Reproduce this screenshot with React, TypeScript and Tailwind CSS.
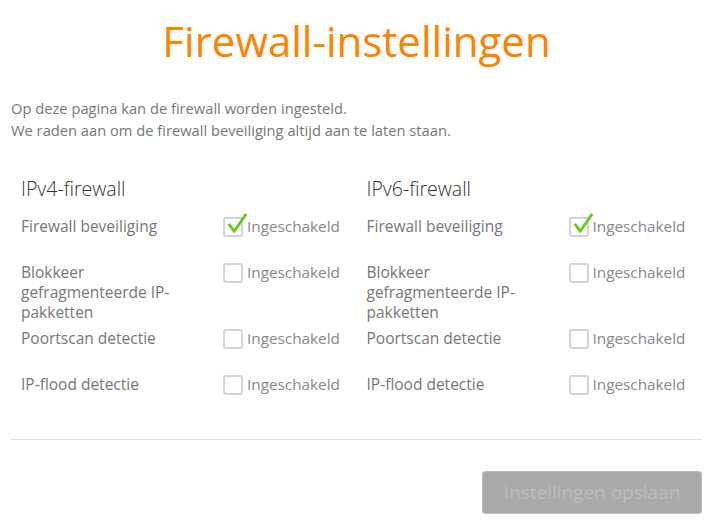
import { useState } from 'react'

type Row = { label: string; checked: boolean }

const rows: Row[] = [
  { label: 'Firewall beveiliging', checked: true },
  { label: 'Blokkeer gefragmenteerde IP-pakketten', checked: false },
  { label: 'Poortscan detectie', checked: false },
  { label: 'IP-flood detectie', checked: false },
]

const Check = ({ checked, onClick }: { checked: boolean; onClick: () => void }) => (
  <button
    type="button"
    onClick={onClick}
    className="relative w-[20px] h-[20px] mt-[1px] shrink-0 rounded-[3px] border-2 border-[#d4d4d4] bg-white"
  >
    {checked && (
      <svg viewBox="0 0 24 24" className="absolute left-[1px] top-[-8px] w-[22px] h-[24px]">
        <path d="M3 13 L9 21 L22 2" fill="none" stroke="#66cc22" strokeWidth="3.2" strokeLinejoin="round" />
      </svg>
    )}
  </button>
)

const Section = ({ title }: { title: string }) => {
  const [state, setState] = useState(rows.map((r) => r.checked))
  return (
    <div className="flex-1 pl-[10px]">
      <h2 className="text-[19.5px] font-light leading-[24px] text-[#333] mb-[15px]">{title}</h2>
      {rows.map((r, i) => (
        <div key={r.label} className="flex min-h-[40px] mb-[6px]">
          <div className="w-[202px] pr-[40px] text-[15.5px] leading-[20px] text-[#777]">{r.label}</div>
          <label className="flex gap-[4px] text-[15.3px] leading-[20px] text-[#888] cursor-pointer">
            <Check checked={state[i]} onClick={() => setState(state.map((s, j) => (j === i ? !s : s)))} />
            Ingeschakeld
          </label>
        </div>
      ))}
    </div>
  )
}

export default function App() {
  return (
    <div className="w-[713px] h-[532px] bg-white px-[11px] pt-[14px] font-['Open_Sans',sans-serif]">
      <h1 className="text-center text-[42px] leading-[54px] text-[#ff8200]">Firewall-instellingen</h1>
      <p className="mt-[29px] text-[14.7px] leading-[22px] text-[#777]">
        Op deze pagina kan de firewall worden ingesteld.
        <br />
        We raden aan om de firewall beveiliging altijd aan te laten staan.
      </p>
      <div className="flex mt-[36px]">
        <Section title="IPv4-firewall" />
        <Section title="IPv6-firewall" />
      </div>
      <div className="mt-[19px] border-t border-[#dddddd]" />
      <div className="flex justify-end mt-[31px]">
        <button
          type="button"
          disabled
          className="w-[220px] h-[43px] rounded-[3px] border border-[#bdbdbd] bg-[#aaaaaa] text-[19px] text-[#bcbcbc]"
        >
          Instellingen opslaan
        </button>
      </div>
    </div>
  )
}
